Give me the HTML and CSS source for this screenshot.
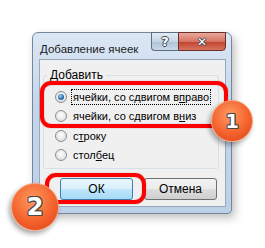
FILE: index.html
```html
<!DOCTYPE html>
<html lang="ru">

<head>
  <meta charset="UTF-8">
  <meta name="viewport" content="width=device-width, initial-scale=1.0">
  <title>Добавление ячеек</title>
  <link rel="stylesheet" href="styles.css">
</head>

<body>

  <div class="stage">
    <div class="window">
      <div class="titlebar">
        <span class="title">Добавление ячеек</span>
        <div class="controls">
          <span class="ctl ctl-help">?</span>
          <span class="ctl ctl-close">✕</span>
        </div>
      </div>

      <div class="client">
        <fieldset class="group">
          <legend>Добавить</legend>
          <div class="row"><span class="radio checked"></span><span class="label focus">ячейки, со сдвигом в<u>п</u>раво</span></div>
          <div class="row"><span class="radio"></span><span class="label">ячейки, со сдвигом в<u>н</u>из</span></div>
          <div class="row"><span class="radio"></span><span class="label">с<u>т</u>року</span></div>
          <div class="row"><span class="radio"></span><span class="label">стол<u>б</u>ец</span></div>
        </fieldset>

        <div class="buttons">
          <button class="btn btn-default">ОК</button>
          <button class="btn">Отмена</button>
        </div>
      </div>
    </div>

    <!-- пометки поверх окна -->
    <div class="mark mark-one"></div>
    <div class="mark mark-two"></div>
    <div class="badge badge-one">1</div>
    <div class="badge badge-two">2</div>
  </div>

</body>

</html>
```

FILE: styles.css
```css
* {
  margin: 0;
  padding: 0;
  box-sizing: border-box;
}

body {
  background-color: #fff;
  font-family: "Liberation Sans", Arial, sans-serif;
  font-size: 12px;
  color: #000;
}

.stage {
  position: relative;
  width: 265px;
  height: 248px;
  overflow: hidden;
  padding: 32px 0 0 32px;
}

.window {
  width: 200px;
  height: 182px;
  display: flex;
  flex-direction: column;
  padding: 0 5px 6px 6px;
  border: 1px solid #77879b;
  border-radius: 6px 6px 4px 4px;
  background: linear-gradient(#dce7f4, #c4d6ec 40%, #bcd0e8);
  box-shadow: 3px 4px 8px rgba(0, 0, 0, 0.25);
}

.titlebar {
  height: 26px;
  display: flex;
  justify-content: space-between;
  align-items: flex-start;
}

.title {
  padding: 8px 0 0 1px;
  font-size: 11.5px;
  line-height: 16px;
  white-space: nowrap;
  color: #1a1a1a;
}

.controls {
  display: flex;
  flex-shrink: 0;
  margin-top: -1px;
}

.ctl {
  height: 19px;
  display: flex;
  justify-content: center;
  align-items: center;
  font-family: "DejaVu Sans", sans-serif;
  font-weight: bold;
  color: #fff;
  border: 1px solid #5d6e84;
  text-shadow: 1px 0 0 #3a4656, -1px 0 0 #3a4656, 0 1px 0 #3a4656, 0 -1px 0 #3a4656;
}

.ctl-help {
  width: 27px;
  font-size: 13px;
  border-radius: 0 0 0 4px;
  border-right: none;
  background: linear-gradient(#e3ebf4, #c6d4e3 50%, #b0c2d6 51%, #c8d8e8);
}

.ctl-close {
  width: 48px;
  font-size: 12px;
  border-radius: 0 0 4px 0;
  border-color: #6b2f2a;
  background: linear-gradient(#e9a99c, #d47462 50%, #c0432e 51%, #d7735e);
}

.client {
  flex: 1;
  background-color: #f0f0f0;
  border: 1px solid #98a9bd;
  display: flex;
  flex-direction: column;
}

.group {
  margin: 7px 6px 0 3px;
  padding: 4px 0 3px 11px;
  border: 1px solid #d5dfe5;
  border-radius: 3px;
}

.group legend {
  margin-left: -8px;
  padding: 0 3px;
  line-height: 16px;
}

.row {
  height: 19.5px;
  display: flex;
  align-items: center;
  white-space: nowrap;
  font-size: 11px;
}

.radio {
  flex-shrink: 0;
  width: 12px;
  height: 12px;
  border-radius: 50%;
  border: 1px solid #8d8d8d;
  background: radial-gradient(circle at 50% 40%, #ffffff, #e6e6e6 60%, #cfcfcf);
  display: flex;
  justify-content: center;
  align-items: center;
  margin-right: 4px;
}

.radio.checked::after {
  content: "";
  width: 6px;
  height: 6px;
  border-radius: 50%;
  background: radial-gradient(circle at 40% 35%, #9fd2f7, #2a6fb0 55%, #13406e);
}

.label {
  line-height: 14px;
  padding: 0 1px;
  border: 1px dotted transparent;
}

.label.focus {
  border-color: #000;
}

.buttons {
  display: flex;
  gap: 11px;
  margin: 9px 0 0 20px;
}

.btn {
  width: 73px;
  height: 22px;
  font-family: inherit;
  font-size: 12px;
  color: #000;
  border: 1px solid #707070;
  border-radius: 3px;
  background: linear-gradient(#f2f2f2, #ebebeb 50%, #dddddd 51%, #cfcfcf);
}

.btn-default {
  border-color: #3c7fb1;
  background: linear-gradient(#eaf6fd, #d9f0fc 50%, #bee6fd 51%, #a7d9f5);
}

.mark {
  position: absolute;
  border: 4px solid #ff0000;
  border-radius: 11px;
  box-shadow: 0 0 1px rgba(80, 0, 0, 0.6), inset 0 0 1px rgba(80, 0, 0, 0.6);
}

.mark-one {
  left: 40px;
  top: 81px;
  width: 188px;
  height: 47px;
}

.mark-two {
  left: 45px;
  top: 173px;
  width: 101px;
  height: 31px;
}

.badge {
  position: absolute;
  border-radius: 50%;
  display: flex;
  justify-content: center;
  align-items: center;
  font-family: "DejaVu Sans", sans-serif;
  font-weight: bold;
  color: #fff;
  background: radial-gradient(circle at 45% 35%, #ff9a62, #f4622c 55%, #d8401a);
  border: 1px solid #f7a27a;
  box-shadow: -2px 3px 5px rgba(0, 0, 0, 0.35);
  text-shadow: 1px 0 0 #4a4a4a, -1px 0 0 #4a4a4a, 0 1px 0 #4a4a4a, 0 -1px 0 #4a4a4a, 1px 1px 0 #4a4a4a, -1px -1px 0 #4a4a4a, 1px -1px 0 #4a4a4a, -1px 1px 0 #4a4a4a;
}

.badge-one {
  left: 211px;
  top: 100px;
  width: 42px;
  height: 42px;
  font-size: 19px;
}

.badge-two {
  left: 11px;
  top: 183px;
  width: 48px;
  height: 48px;
  font-size: 24px;
}
```
